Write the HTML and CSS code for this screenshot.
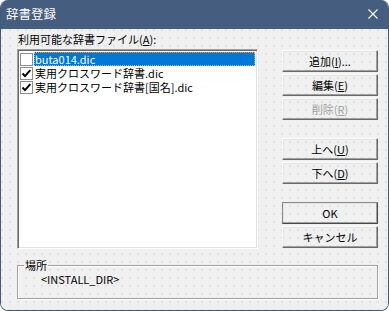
FILE: index.html
```html
<!DOCTYPE html>
<html lang="ja">
<head>
  <meta charset="UTF-8">
  <meta name="viewport" content="width=device-width, initial-scale=1.0">
  <title>辞書登録</title>
  <link rel="stylesheet" href="styles.css">
</head>
<body>
  <div class="window">
    <!-- Barra de título -->
    <div class="titlebar">
      <span class="title">辞書登録</span>
      <svg class="close" width="10" height="10" viewBox="0 0 10 10">
        <path d="M0.5 0.5 L9.5 9.5 M9.5 0.5 L0.5 9.5" stroke="#fff" stroke-width="1.1" fill="none"/>
      </svg>
    </div>

    <div class="client">
      <div class="main">
        <!-- Lista de diccionarios -->
        <div class="left">
          <div class="label">利用可能な辞書ファイル(<u>A</u>):</div>
          <ul class="listbox">
            <li class="item selected">
              <span class="check"></span>
              <span class="name">buta014.dic</span>
            </li>
            <li class="item">
              <span class="check checked">
                <svg width="11" height="11" viewBox="0 0 11 11"><path d="M1.5 5.5 L4 8.2 L9.3 2.2" stroke="#000" stroke-width="1.9" fill="none"/></svg>
              </span>
              <span class="name">実用クロスワード辞書.dic</span>
            </li>
            <li class="item">
              <span class="check checked">
                <svg width="11" height="11" viewBox="0 0 11 11"><path d="M1.5 5.5 L4 8.2 L9.3 2.2" stroke="#000" stroke-width="1.9" fill="none"/></svg>
              </span>
              <span class="name">実用クロスワード辞書[国名].dic</span>
            </li>
          </ul>
        </div>

        <!-- Botones -->
        <div class="buttons">
          <div class="btn-group">
            <button class="btn">追加(<u>I</u>)...</button>
            <button class="btn">編集(<u>E</u>)</button>
            <button class="btn disabled">削除(<u>R</u>)</button>
          </div>
          <div class="btn-group">
            <button class="btn">上へ(<u>U</u>)</button>
            <button class="btn">下へ(<u>D</u>)</button>
          </div>
          <div class="btn-group">
            <button class="btn default">OK</button>
            <button class="btn">キャンセル</button>
          </div>
        </div>
      </div>

      <!-- Ubicación -->
      <fieldset class="group">
        <legend>場所</legend>
        <div class="path">&lt;INSTALL_DIR&gt;</div>
      </fieldset>
    </div>
  </div>
</body>
</html>
```

FILE: styles.css
```css
/* RESET */
* {
  margin: 0;
  padding: 0;
  box-sizing: border-box;
}

body {
  background-color: #fff;
  font-family: "Noto Sans CJK JP", "Noto Sans", sans-serif;
  font-size: 11px;
  color: #000;
}

/* VENTANA */
.window {
  width: 389px;
  height: 311px;
  border-radius: 8px;
  overflow: hidden;
  background-color: #f0f0f0;
  border: 1px solid #42597b;
  border-top: none;
  display: flex;
  flex-direction: column;
}

.titlebar {
  height: 29px;
  background-color: #455d7e;
  display: flex;
  align-items: center;
  justify-content: space-between;
  padding: 0 10px 1px 5px;
  flex-shrink: 0;
}

.title {
  color: #fff;
  font-size: 12.5px;
  line-height: 14px;
}

.close {
  display: block;
}

/* ÁREA CLIENTE */
.client {
  flex: 1;
  padding: 3px 10px 0 16px;
  background-color: #f0f0f0;
  background-image: radial-gradient(circle at 1px 1px, #e0e0e0 0.8px, transparent 1px);
  background-size: 8px 8px;
}

.main {
  display: flex;
  justify-content: space-between;
}

.label {
  height: 14px;
  line-height: 14px;
  margin-bottom: 3px;
  padding-left: 1px;
}

/* LISTA */
.listbox {
  list-style: none;
  width: 241px;
  height: 200px;
  background-color: #fff;
  border: 1px solid;
  border-color: #a0a0a0 #fff #fff #a0a0a0;
  box-shadow: inset 1px 1px 0 #696969, inset -1px -1px 0 #e3e3e3;
  padding: 2px 2px 0 2px;
}

.item {
  display: flex;
  align-items: center;
  height: 14px;
  line-height: 14px;
  white-space: nowrap;
  overflow: hidden;
}

.check {
  width: 13px;
  height: 13px;
  border: 1px solid #8d8d8d;
  background-color: #fff;
  flex-shrink: 0;
  display: flex;
  align-items: center;
  justify-content: center;
}

.name {
  margin-left: 1px;
  padding: 0 1px;
  flex: 1;
  height: 14px;
}

.selected .name {
  background-color: #0078d7;
  color: #fff;
  outline: 1px dotted #f5a051;
  outline-offset: -1px;
}

/* BOTONES */
.buttons {
  width: 96px;
  padding-top: 18px;
  display: flex;
  flex-direction: column;
  gap: 18px;
}

.btn-group {
  display: flex;
  flex-direction: column;
  gap: 2px;
}

.btn {
  height: 22px;
  font-family: inherit;
  font-size: 11px;
  color: #000;
  background: transparent;
  border: 1px solid;
  border-color: #fff #696969 #696969 #fff;
  box-shadow: inset -1px -1px 0 #a0a0a0, inset 1px 1px 0 #e3e3e3;
}

.btn.default {
  border-color: #8a8a8a #4a4a4a #4a4a4a #8a8a8a;
}

.btn.disabled {
  color: #a0a0a0;
}

/* GRUPO */
.group {
  margin-top: 9px;
  width: 361px;
  border: 1px solid #a0a0a0;
  box-shadow: 1px 1px 0 #fff, inset 1px 1px 0 #fff;
  padding: 0 0 12px 0;
}

.group legend {
  margin-left: 6px;
  padding: 0 1px;
  line-height: 14px;
}

.path {
  margin-left: 23px;
  line-height: 14px;
}
```
